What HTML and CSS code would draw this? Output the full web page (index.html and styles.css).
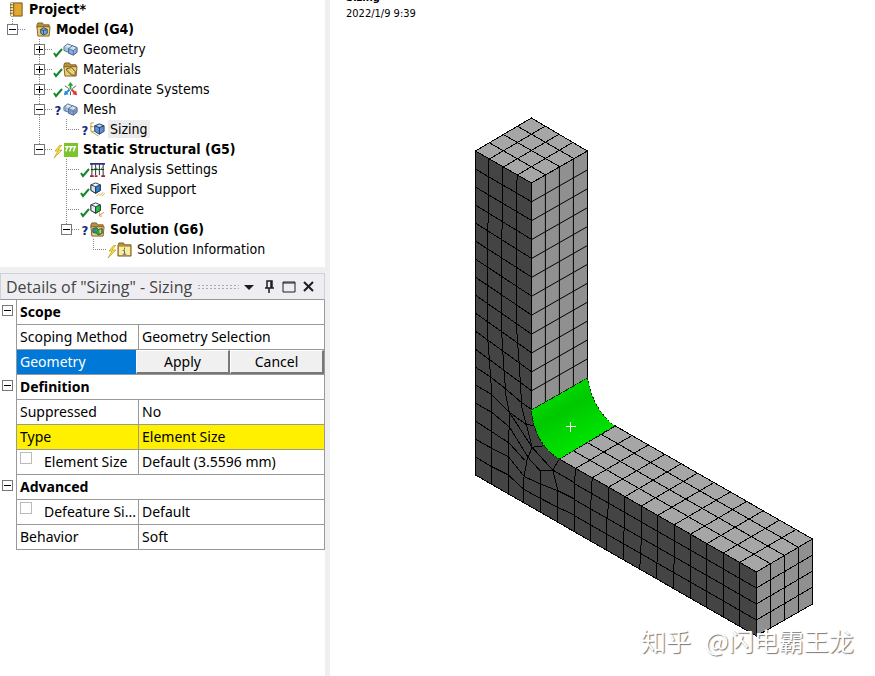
FILE: index.html
```
<!DOCTYPE html>
<html lang="en">
<head>
<meta charset="UTF-8">
<meta name="viewport" content="width=device-width, initial-scale=1.0">
<title>Mechanical - Sizing</title>
<link rel="stylesheet" href="styles.css">
</head>
<body>

<!-- shared icon shapes -->
<svg class="defs" aria-hidden="true">
  <symbol id="check" viewBox="0 0 10 10"><path d="M1 6l2 3 6-7" fill="none" stroke="#16852b" stroke-width="2"/></symbol>
  <symbol id="bolt" viewBox="0 0 10 14"><path d="M7 0L2 6h3L1 13l8-8H5l4-5z" fill="#ffe53b" stroke="#b79a20" stroke-width=".7"/></symbol>
  <symbol id="blocks" viewBox="0 0 16 16">
    <path d="M1 5l4-3 5 2v5l-4 2-5-2z" fill="#a9c3e2" stroke="#536f91"/>
    <path d="M6 7l4-3 5 2v5l-4 3-5-2z" fill="#86aee0" stroke="#455f80"/>
    <path d="M6 7l4-3 5 2-4 3z" fill="#cfe0f3" stroke="#455f80" stroke-width=".7"/>
    <path d="M11 9v5" stroke="#455f80" stroke-width=".8"/>
    <path d="M2 5l3-2 4 1-3 2z" fill="#dce8f5"/>
  </symbol>
  <symbol id="folder" viewBox="0 0 16 16">
    <path d="M1 3l1-2h5l1 2h6v3H1z" fill="#b99142" stroke="#80602a"/>
    <path d="M1 5h14l-1 10H2z" fill="#e8cd72" stroke="#80602a"/>
  </symbol>
</svg>

<div class="app">
  <aside class="sidebar">
    <nav class="outline" aria-label="Outline">
      <div class="node project">
        <svg class="icon" viewBox="0 0 16 16"><path d="M2 1h12v14H2z" fill="#e3a62f" stroke="#6c5222"/><path d="M2 1h3v14H2z" fill="#fae7a3"/><path d="M5 1v14M1 3h3M1 6h3M1 9h3M1 12h3" stroke="#6c5222"/></svg>
        <span class="name bold">Project*</span>
      </div>
      <ul class="tree">
        <li>
          <div class="node">
            <button class="toggle minus" aria-label="Collapse Model"></button><i class="dots"></i><span class="status"></span>
            <svg class="icon" viewBox="0 0 16 16"><use href="#folder"/><path d="M5 8l3-2 4 2v4l-4 2-3-2z" fill="#7ea8d9" stroke="#304b6b"/><path d="M5 8l3 1 4-1M8 9v4" fill="none" stroke="#304b6b"/></svg>
            <span class="name bold">Model (G4)</span>
          </div>
          <ul class="tree nested">
            <li>
              <div class="node">
                <button class="toggle plus" aria-label="Expand Geometry"></button><i class="dots"></i><svg class="status"><use href="#check"/></svg>
                <svg class="icon"><use href="#blocks"/></svg>
                <span class="name">Geometry</span>
              </div>
            </li>
            <li>
              <div class="node">
                <button class="toggle plus" aria-label="Expand Materials"></button><i class="dots"></i><svg class="status"><use href="#check"/></svg>
                <svg class="icon" viewBox="0 0 16 16"><use href="#folder"/><path d="M4 7l5-1 4 4v4H9L4 9z" fill="#d8b65a" stroke="#71541f"/><path d="M6 8l6 5M8 7l4 4" stroke="#fff2b5"/></svg>
                <span class="name">Materials</span>
              </div>
            </li>
            <li>
              <div class="node">
                <button class="toggle plus" aria-label="Expand Coordinate Systems"></button><i class="dots"></i><svg class="status"><use href="#check"/></svg>
                <svg class="icon" viewBox="0 0 16 16"><path d="M8 8V2" stroke="#28a53a" stroke-width="2"/><path d="M5 4l3-4 3 4z" fill="#28a53a"/><path d="M7 8l-4 4" stroke="#1c8fe0" stroke-width="2"/><path d="M1 14l1-5 4 4z" fill="#1c8fe0"/><path d="M9 8l4 4" stroke="#e03434" stroke-width="2"/><path d="M15 14l-1-5-4 4z" fill="#e03434"/><path d="M2 4l4 3M14 4l-4 3M8 10v4" stroke="#555"/></svg>
                <span class="name">Coordinate Systems</span>
              </div>
            </li>
            <li>
              <div class="node">
                <button class="toggle minus" aria-label="Collapse Mesh"></button><i class="dots"></i><span class="status">?</span>
                <svg class="icon" viewBox="0 0 16 16"><use href="#blocks"/><path d="M3 4v6M8 8v5M13 8v5M6 9l5 2 4-2" fill="none" stroke="#6d839c" stroke-width=".7"/></svg>
                <span class="name">Mesh</span>
              </div>
              <ul class="tree nested">
                <li>
                  <div class="node">
                    <i class="dots leaf"></i><span class="status">?</span>
                    <svg class="icon" viewBox="0 0 16 16"><path d="M1 1v9l8 5M1 1h3M0 5h4M1 10h4" fill="none" stroke="#c49b35"/><path d="M5 4l5-2 5 2v6l-5 3-5-3z" fill="#5d94d6" stroke="#253f69"/><path d="M5 4l5 2 5-2M10 6v7" fill="none" stroke="#253f69"/><path d="M7 4l3-1 3 1-3 1z" fill="#d2e4f6"/></svg>
                    <span class="name selected">Sizing</span>
                  </div>
                </li>
              </ul>
            </li>
            <li>
              <div class="node">
                <button class="toggle minus" aria-label="Collapse Static Structural"></button><i class="dots"></i><svg class="status"><use href="#bolt"/></svg>
                <svg class="icon" viewBox="0 0 16 16"><path d="M1 1h15v15H1z" fill="#7ac52d"/><path d="M2 5h12M5 5l-2 5M9 5l-2 5M13 5l-2 5" stroke="#fff" stroke-width="1.5"/></svg>
                <span class="name bold">Static Structural (G5)</span>
              </div>
              <ul class="tree nested">
                <li>
                  <div class="node">
                    <i class="dots leaf"></i><svg class="status"><use href="#check"/></svg>
                    <svg class="icon" viewBox="0 0 16 16"><path d="M2 1v14M6 1v13M10 1v13M14 1v14M1 8h14" stroke="#222"/><path d="M0 2h4M4 2h4M8 2h4M12 2h4" stroke="#29348c" stroke-width="2"/><path d="M0 15h4M5 15h3M12 15h4" stroke="#a42437" stroke-width="2"/><path d="M2 10l4-4 4 3 4-4" fill="none" stroke="#29a04b"/></svg>
                    <span class="name">Analysis Settings</span>
                  </div>
                </li>
                <li>
                  <div class="node">
                    <i class="dots leaf"></i><svg class="status"><use href="#check"/></svg>
                    <svg class="icon" viewBox="0 0 16 16"><path d="M1 3l5-2 5 2v6l-5 3-5-3z" fill="#fff" stroke="#263746"/><path d="M1 3l5 2v7L1 9z" fill="#cfdfee" stroke="#263746"/><path d="M6 5l5-2v6l-5 3z" fill="#2f80cc" stroke="#263746"/><path d="M7 15l3-3M10 15l4-4M13 15l3-3" stroke="#d69a31"/></svg>
                    <span class="name">Fixed Support</span>
                  </div>
                </li>
                <li>
                  <div class="node">
                    <i class="dots leaf"></i><svg class="status"><use href="#check"/></svg>
                    <svg class="icon" viewBox="0 0 16 16"><path d="M1 3l5-2 5 2v6l-5 3-5-3z" fill="#fff" stroke="#263746"/><path d="M1 3l5 2v7L1 9z" fill="#e4ece4" stroke="#263746"/><path d="M6 5l5-2v6l-5 3z" fill="#26c43c" stroke="#263746"/><path d="M10 14l5-3M10 11v4h3" fill="none" stroke="#d89545"/></svg>
                    <span class="name">Force</span>
                  </div>
                </li>
                <li>
                  <div class="node">
                    <button class="toggle minus" aria-label="Collapse Solution"></button><i class="dots"></i><span class="status">?</span>
                    <svg class="icon" viewBox="0 0 16 16"><use href="#folder"/><path d="M3 7l4-1 2 2 4-1v5l-4 2-2-2-4-1z" fill="#2c9d59" stroke="#315142"/><path d="M4 8l2 3" stroke="#337bd0" stroke-width="2"/><path d="M11 8v4" stroke="#d4ce36" stroke-width="2"/></svg>
                    <span class="name bold">Solution (G6)</span>
                  </div>
                  <ul class="tree nested">
                    <li>
                      <div class="node">
                        <i class="dots leaf"></i><svg class="status"><use href="#bolt"/></svg>
                        <svg class="icon" viewBox="0 0 16 16"><path d="M1 4l1-3h5l1 2h7v12H1z" fill="#b99142" stroke="#80602a"/><path d="M2 5h12v9H2z" fill="#f7ee9c"/><path d="M8 6v2M6 9h2v4M6 13h4" fill="none" stroke="#576077"/></svg>
                        <span class="name">Solution Information</span>
                      </div>
                    </li>
                  </ul>
                </li>
              </ul>
            </li>
          </ul>
        </li>
      </ul>
    </nav>

    <section class="details">
      <header class="details-bar">
        <h2>Details of "Sizing" - Sizing</h2>
        <span class="grip"></span>
        <button class="tool" aria-label="Menu"><svg viewBox="0 0 14 14"><path d="M2 5h10L7 10z" fill="#1e1e1e"/></svg></button>
        <button class="tool" aria-label="Pin"><svg viewBox="0 0 14 14"><path d="M5 1h5v7H5zM3 8h9M7 8v5M9 1v7" fill="none" stroke="#1e1e1e" stroke-width="1.5"/></svg></button>
        <button class="tool" aria-label="Maximize"><svg viewBox="0 0 14 14"><path d="M1 2h12v10H1zM1 3h12" fill="none" stroke="#1e1e1e"/></svg></button>
        <button class="tool" aria-label="Close"><svg viewBox="0 0 14 14"><path d="M2 2l9 9M11 2l-9 9" stroke="#1e1e1e" stroke-width="2"/></svg></button>
      </header>
      <table class="props">
        <colgroup><col class="col-gutter"><col class="col-name"><col></colgroup>
        <tr class="group"><td class="gutter"><button class="toggle minus" aria-label="Collapse Scope"></button></td><th colspan="2">Scope</th></tr>
        <tr><td class="gutter"></td><td>Scoping Method</td><td>Geometry Selection</td></tr>
        <tr><td class="gutter"></td><td class="active">Geometry</td><td class="actions"><div class="pair"><button>Apply</button><button>Cancel</button></div></td></tr>
        <tr class="group"><td class="gutter"><button class="toggle minus" aria-label="Collapse Definition"></button></td><th colspan="2">Definition</th></tr>
        <tr><td class="gutter"></td><td>Suppressed</td><td>No</td></tr>
        <tr class="warn"><td class="gutter"></td><td>Type</td><td>Element Size</td></tr>
        <tr><td class="gutter"></td><td><div class="param"><input type="checkbox" id="elementSize"><label for="elementSize">Element Size</label></div></td><td>Default (3.5596 mm)</td></tr>
        <tr class="group"><td class="gutter"><button class="toggle minus" aria-label="Collapse Advanced"></button></td><th colspan="2">Advanced</th></tr>
        <tr><td class="gutter"></td><td><div class="param"><input type="checkbox" id="defeatureSize"><label for="defeatureSize">Defeature Si...</label></div></td><td>Default</td></tr>
        <tr><td class="gutter"></td><td>Behavior</td><td>Soft</td></tr>
      </table>
    </section>
  </aside>

  <main class="viewport">
    <div class="caption">
      <strong>Sizing</strong>
      <span>2022/1/9 9:39</span>
    </div>

    <svg class="mesh" viewBox="470.6 110 350 530" role="img" aria-label="Meshed L bracket">
      <defs>
        <linearGradient id="fillet" gradientUnits="userSpaceOnUse" x1="552" y1="392" x2="582" y2="446">
          <stop offset="0" stop-color="#00dc00"/>
          <stop offset=".35" stop-color="#00c800"/>
          <stop offset="1" stop-color="#00e400"/>
        </linearGradient>
      </defs>

      <!-- faces -->
      <path class="face dark" d="M476 151L532 183V410Q535 444 560 459L757 572V636L476 475z"/>
      <path class="face top" d="M476 151L532 118L588 151L532 183z"/>
      <path class="face side" d="M532 183L588 151V378L532 410z"/>
      <path class="face top" d="M560 459L616 426L813 539L757 572z"/>
      <path class="face side" d="M757 572L813 539V604L757 636z"/>

      <!-- regular grids, one unit per element -->
      <path class="grid" transform="matrix(14 -8.25 14 8 476 151)" d="M1 0V4M2 0V4M3 0V4M0 1H4M0 2H4M0 3H4"/>
      <path class="grid" transform="matrix(14 -8 0 18.9 532 183)" d="M1 0V12M2 0V12M3 0V12M0 1H4M0 2H4M0 3H4M0 4H4M0 5H4M0 6H4M0 7H4M0 8H4M0 9H4M0 10H4M0 11H4"/>
      <path class="grid" transform="matrix(16.4 9.4 14 -8.2 560 459)" d="M0 1H12M0 2H12M0 3H12M1 0V4M2 0V4M3 0V4M4 0V4M5 0V4M6 0V4M7 0V4M8 0V4M9 0V4M10 0V4M11 0V4"/>
      <path class="grid" transform="matrix(14 -8.2 0 16 757 572)" d="M1 0V4M2 0V4M3 0V4M0 1H4M0 2H4M0 3H4"/>
      <path class="grid" transform="matrix(16.4 9.4 0 16 560 459)" d="M.9 1H12M.9 2H12M.9 3H12M1 0L.9 1V4M2 0L1.9 2V4M3 0L3 1L2.9 2V4M4 0V1L3.9 3V4M5 0L5 2L4.9 4M6 0L6 2L5.9 4M7 0V2L6.95 4M8 0V4M9 0V4M10 0V4M11 0V4"/>

      <!-- front face of the column and the corner -->
      <g transform="translate(460 280) scale(.33333)">
        <path class="grid" d="M46-334L216-235M46-280L216-179M46-226L216-122M46-172L216-65M46-118L216-9M46-64L216 48M46-10L216 105M46 44L216 162M46 98L216 218M46 152L216 275M46 206L216 332M46 260L92 290L137 325L183 365L216 388"/>
        <path class="grid" d="M88-364V-185L83-155V150L90 240L97 340V614M130-340V-205L125-80L127 160L133 260L140 350L150 400L147 530V643M173-316L170 0L172 150L180 260L187 380L218 502L203 540L193 595V670"/>
        <path class="grid" d="M46 314L95 342L150 397L200 433L226 438M46 368L97 397L150 441L208 535M46 422L97 455L150 490L195 540M46 476L97 505L147 530L195 590L243 612L295 632L345 657M46 530L97 560L147 585L193 628L243 655L295 682L345 705"/>
        <path class="grid" d="M150 397L218 502L255 497M218 502L280 570L300 537M208 535L243 573L280 570L295 630V727M243 573V699M280 570L345 608"/>
      </g>

      <!-- picked fillet -->
      <path class="picked" d="M532 410L588 378Q593 408 615 426L560 459Q535 444 532 410z"/>
      <path class="cursor" d="M566.5 426.5h10M571.5 421.5v10"/>
    </svg>

    <div class="watermark"><span>知乎</span><span>@闪电霸王龙</span></div>
  </main>
</div>

</body>
</html>
```
FILE: styles.css
```
* {
  margin: 0;
  padding: 0;
  box-sizing: border-box;
}

body {
  background: #fff;
  color: #000;
  font-family: 'Noto Sans', sans-serif;
  font-size: 14px;
}

button {
  font: inherit;
  color: inherit;
}

.defs {
  display: none;
}

.app {
  display: flex;
  height: 100vh;
  overflow: hidden;
}

.sidebar {
  flex: 0 0 330px;
  border-right: 5px solid #efeff1;
}

/* outline tree */
.outline {
  height: 274px;
  margin-top: -1px;
  border-bottom: 6px solid #efeff1;
  font-family: 'DejaVu Sans Condensed', 'Noto Sans', sans-serif;
}

.tree {
  list-style: none;
}

.nested {
  padding-left: 27px;
}

.tree li {
  background: repeating-linear-gradient(#888 0 1px, transparent 1px 2px) 12px 0 / 1px 100% no-repeat;
}

.tree li:last-child {
  background-size: 1px 10px;
}

.node {
  display: flex;
  align-items: center;
  height: 20px;
  padding-left: 7px;
  white-space: nowrap;
}

.project {
  padding-left: 9px;
}

.toggle {
  flex: none;
  width: 11px;
  height: 11px;
  border: 1px solid #777;
  background: linear-gradient(#000, #000) center / 7px 1px no-repeat #fff;
}

.plus {
  background: linear-gradient(#000, #000) center / 7px 1px no-repeat,
    linear-gradient(#000, #000) center / 1px 7px no-repeat #fff;
}

.dots {
  width: 8px;
  height: 1px;
  background: repeating-linear-gradient(90deg, #888 0 1px, transparent 1px 2px);
}

.leaf {
  width: 14px;
  margin-left: 5px;
}

.status {
  width: 10px;
  height: 14px;
  color: #112a7c;
  font-size: 13px;
  font-weight: bold;
  line-height: 18px;
  text-align: center;
}

svg.status {
  align-self: flex-end;
}

.icon {
  flex: none;
  width: 15px;
  height: 15px;
}

.name {
  padding: 0 2px;
  margin-left: 3px;
  line-height: 18px;
}

.bold {
  font-weight: bold;
}

.selected {
  background: #ececec;
}

/* details panel */
.details-bar {
  display: flex;
  align-items: center;
  height: 27px;
  padding: 0 5px;
  background: #eeeef2;
  border: 1px solid #d0d0d6;
  border-bottom-color: #999;
}

.details-bar h2 {
  color: #444;
  font-family: 'Open Sans', 'Noto Sans', sans-serif;
  font-size: 16px;
  font-weight: normal;
  line-height: 24px;
  white-space: nowrap;
}

.grip {
  flex: 1;
  height: 6px;
  margin-left: 5px;
  background: radial-gradient(#aaa 1px, transparent 1px) 0 0 / 4px 3px;
}

.tool {
  width: 20px;
  height: 20px;
  border: none;
  background: none;
}

.tool svg {
  display: block;
  width: 14px;
  height: 14px;
  margin: auto;
}

.props {
  width: 100%;
  border-spacing: 0;
  table-layout: fixed;
}

.col-gutter {
  width: 16px;
}

.col-name {
  width: 122px;
}

.props td,
.props th {
  height: 25px;
  padding-left: 3px;
  border-left: 1px solid #999;
  border-bottom: 1px solid #999;
  line-height: 24px;
  text-align: left;
  white-space: nowrap;
}

.props td:last-child,
.props th {
  border-right: 1px solid #999;
}

.props .gutter {
  padding: 5px 0 0 2px;
  border: none;
  line-height: 0;
  vertical-align: top;
}

.props .active {
  background: #0078d7;
  color: #fff;
}

.props .actions {
  padding: 0;
  border-left: none;
}

.pair {
  display: flex;
  height: 24px;
  margin-left: -2px;
}

.pair button {
  flex: 1;
  border: 1px solid #fff;
  border-right: 2px solid #777;
  border-bottom: 2px solid #777;
  background: #f0f0f0;
  line-height: 20px;
}

.warn td:not(.gutter) {
  background: #fff000;
}

.param {
  display: flex;
  gap: 12px;
}

.param input {
  appearance: none;
  width: 12px;
  height: 12px;
  margin-top: 2px;
  border: 1px solid #bbb;
  background: #fff;
}

/* graphics area */
.viewport {
  position: relative;
  flex: 1;
  overflow: hidden;
}

.caption {
  display: flex;
  flex-direction: column;
  margin: -10px 0 0 16px;
  font-family: 'DejaVu Sans Condensed', sans-serif;
  font-size: 11px;
  line-height: 16px;
}

.mesh {
  position: absolute;
  left: 140px;
  top: 110px;
  width: 350px;
  height: 530px;
  shape-rendering: crispEdges;
}

.face {
  stroke: #000;
}

.dark {
  fill: #444;
}

.top {
  fill: #a6a6a6;
}

.side {
  fill: #909090;
}

.grid {
  fill: none;
  stroke: #000;
  vector-effect: non-scaling-stroke;
}

.picked {
  fill: url(#fillet);
  stroke: #063806;
  stroke-dasharray: 2 2;
}

.cursor {
  stroke: #fff;
}

.watermark {
  position: absolute;
  left: 311px;
  top: 622px;
  display: flex;
  gap: 14px;
  color: #fff;
  font-family: 'Noto Sans CJK SC', sans-serif;
  font-size: 25px;
  line-height: 36px;
  text-shadow: 1px 1px 1px #777;
  white-space: nowrap;
}
```
